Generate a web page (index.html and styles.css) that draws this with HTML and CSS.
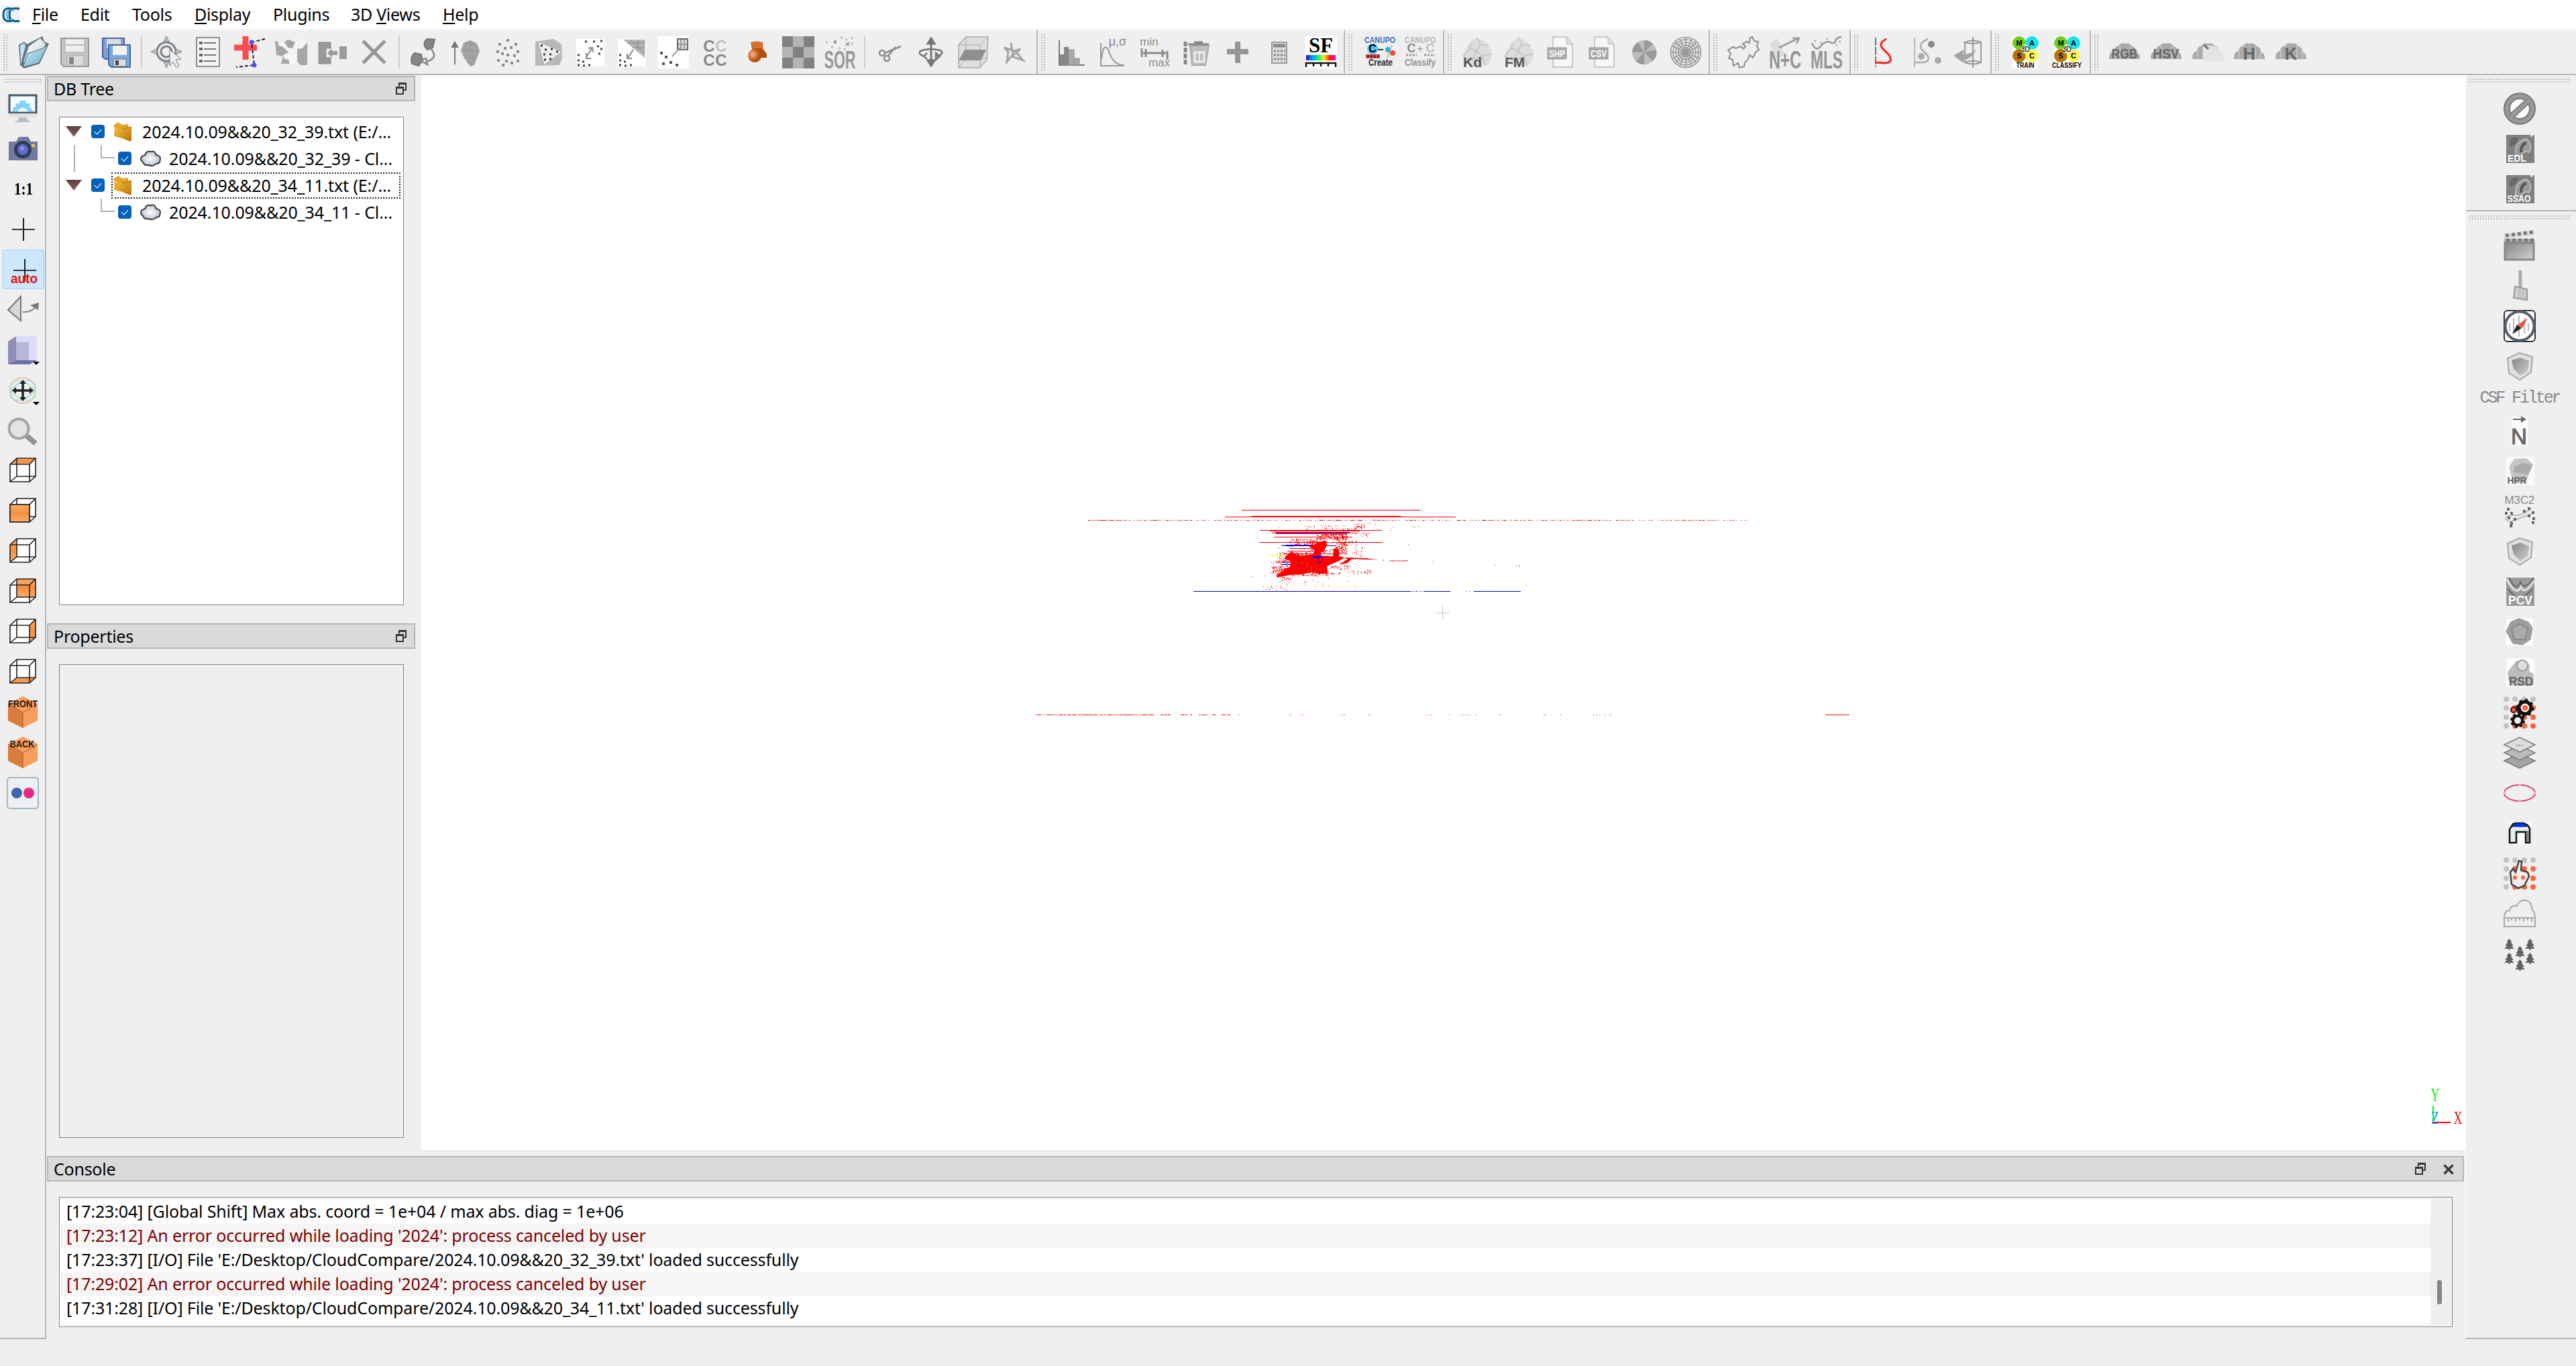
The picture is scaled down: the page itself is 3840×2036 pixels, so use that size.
FILE: index.html
```html
<!DOCTYPE html>
<html lang="en">
<head>
<meta charset="utf-8">
<title>CloudCompare</title>
<link rel="stylesheet" href="styles.css">
</head>
<body>
<svg class="defs" aria-hidden="true">
<defs>
<linearGradient id="paper" x1="0" y1="0" x2="1" y2="1"><stop offset="0" stop-color="#fff"/><stop offset="1" stop-color="#c9d3d8"/></linearGradient>
<linearGradient id="blue" x1="0" y1="0" x2="1" y2="1"><stop offset="0" stop-color="#d4eefa"/><stop offset="1" stop-color="#6aa9c8"/></linearGradient>
<linearGradient id="orange" x1="0" y1="0" x2="0" y2="1"><stop offset="0" stop-color="#f9ac6b"/><stop offset=".5" stop-color="#f78f3e"/><stop offset="1" stop-color="#f9ac6b"/></linearGradient>
<linearGradient id="gold" x1="0" y1="0" x2="1" y2="1"><stop offset="0" stop-color="#f5bf3d"/><stop offset="1" stop-color="#b97608"/></linearGradient>
<linearGradient id="rainbow"><stop offset="0" stop-color="#30c"/><stop offset=".2" stop-color="#09f"/><stop offset=".4" stop-color="#0e8"/><stop offset=".6" stop-color="#fe0"/><stop offset=".8" stop-color="#f20"/><stop offset="1" stop-color="#f0c"/></linearGradient>
<linearGradient id="grey" x1="0" y1="0" x2="1" y2="1"><stop offset="0" stop-color="#868686"/><stop offset="1" stop-color="#d0d0d0"/></linearGradient>
<radialGradient id="ball"><stop offset="0" stop-color="#fff"/><stop offset="1" stop-color="#b8c4d0"/></radialGradient>
<radialGradient id="copper" cx=".35" cy=".4"><stop offset="0" stop-color="#f7b486"/><stop offset="1" stop-color="#b5500a"/></radialGradient>
<symbol id="cube" viewBox="0 0 48 48"><path d="M5 14 15 5H43V31L33 40H5Z" fill="#fff"/></symbol>
<symbol id="wire" viewBox="0 0 48 48"><path d="M5 14H34V40H5ZM15 5H43V32H15ZM5 14 15 5M34 14 43 5M34 40 43 32M5 40 15 32" fill="none" stroke="#222" stroke-width="1.6"/></symbol>
<symbol id="folder" viewBox="0 0 30 32"><path d="M1 7 8 2 14 6 23 5 25 24 8 24Z" fill="#e0a528"/><path d="M3 8 14 13 28 9 28 29 26 31 14 26 2 23Z" fill="url(#gold)"/><path d="M14 13 28 9" stroke="#a86c08" stroke-width="1" fill="none"/></symbol>
<symbol id="cloud" viewBox="0 0 32 28"><path d="M8 9Q9 3 16 4 23 2 24 9 32 10 30 17 30 22 24 22 20 27 13 24 6 25 5 20-1 16 3 11Z" fill="url(#ball)" stroke="#3c3c3c" stroke-width="2"/></symbol>
<symbol id="float" viewBox="0 0 16 18"><path d="M5 5.500V1H15V11H11" fill="none" stroke="#333" stroke-width="2"/><path d="M4 1.500H16M0 7.500H12" stroke="#333" stroke-width="3"/><path d="M1 7V17H11V7" fill="none" stroke="#333" stroke-width="2"/></symbol>
<symbol id="shield" viewBox="0 0 48 48"><path d="M6 12 24 4 43 10 41 33 24 44 8 34Z" fill="#e0e0e0" stroke="#a8a8a8" stroke-width="2"/><path d="M12 15 25 11 38 16 36 31 25 38 15 28Z" fill="url(#grey)"/></symbol>
<symbol id="puff" viewBox="0 0 48 28"><path d="M1 26Q1 15 8 14 9 7 15 6 18 1 25 3 31 1 35 7 41 8 41 15 47 17 47 26Z" fill="#aaa"/><path d="M9 25V14M17 25V6M33 25V7M41 25V15" stroke="#c4c4c4" stroke-width="2"/></symbol>
<symbol id="rock" viewBox="0 0 48 48"><path d="M2 30Q6 12 22 2 42 8 45 26 44 40 36 44H16Q4 42 2 30Z" fill="#ddd"/><path d="M2 30 12 18 22 22 28 12 22 2M12 18 14 10M28 12 40 14M22 22 30 30 45 26M30 30 36 44M22 22 16 36 2 30M16 36 30 30" fill="none" stroke="#c2c2c2" stroke-width="1.500"/></symbol>
<symbol id="page" viewBox="0 0 48 48"><path d="M12 1H32L41 12V46H12Z" fill="#f7f7f7" stroke="#bbb" stroke-width="1.500"/><path d="M32 1V12H41" fill="#ddd" stroke="#bbb"/><rect x="4" y="17" width="28" height="17" fill="#aaa" stroke="#999"/></symbol>
<symbol id="quad" viewBox="0 0 48 48"><rect x="5" width="38" height="48" fill="#fff"/><circle cx="15" cy="10" r="10" fill="#6fd01c"/><circle cx="34" cy="10" r="10" fill="#12e4f0"/><circle cx="15" cy="29" r="10" fill="#b97608"/><circle cx="34" cy="29" r="10" fill="#fdf55e"/><circle cx="24" cy="19" r="7" fill="#e8e8d8" opacity=".75"/><text x="15" y="14" class="b q">M</text><text x="34" y="14" class="b q">A</text><text x="24" y="23" class="q">3D</text><text x="15" y="33" class="b q">S</text><text x="34" y="33" class="b q">C</text></symbol>
<symbol id="pine" viewBox="0 0 14 16"><path d="M7 0 11 5 9 5 13 10H10L14 14H8V16H6V14H0L4 10H1L5 5H3Z" fill="#616161"/></symbol>
<symbol id="stone" viewBox="0 0 42 42"><rect width="42" height="42" fill="#808080"/><path d="M4 8Q12-2 20 5 12 20 4 20Z" fill="#6a6a6a" stroke="#999"/><path d="M14 30Q12 10 30 6 40 14 34 26 26 22 22 32Z" fill="#999" stroke="#b8b8b8" stroke-width="2"/><path d="M22 26Q22 14 30 12" stroke="#555" stroke-width="4" fill="none"/><path d="M36 2 40 0" stroke="#ddd" stroke-width="3"/></symbol>
<symbol id="grid" viewBox="0 0 48 48"><g fill="#c3c3c3"><circle cx="4" cy="4" r="4"/><circle cx="17" cy="4" r="4"/><circle cx="31" cy="4" r="4"/><circle cx="44" cy="4" r="4"/><circle cx="4" cy="17" r="4"/><circle cx="4" cy="31" r="4"/><circle cx="4" cy="44" r="4"/></g><g fill="#fb6440"><circle cx="17" cy="17" r="4"/><circle cx="31" cy="17" r="4"/><circle cx="44" cy="17" r="4"/><circle cx="17" cy="31" r="4"/><circle cx="31" cy="31" r="4"/><circle cx="44" cy="31" r="4"/><circle cx="17" cy="44" r="4"/><circle cx="31" cy="44" r="4"/><circle cx="44" cy="44" r="4"/></g></symbol>
</defs>
</svg>

<div class="window">
<nav class="menubar">
<svg class="logo" viewBox="0 0 28 28"><rect width="28" height="28" fill="#eef2f5"/><path d="M16 5Q3 2 3 14T16 23M27 5Q12 2 12 14T27 23" fill="none" stroke="#0b5b87" stroke-width="3"/><path d="M19 7Q8 5 8 14T19 21" fill="none" stroke="#4aa5d0" stroke-width="2"/></svg>
<span class="m1"><u>F</u>ile</span><span class="m2">Edit</span><span class="m3">Tools</span><span class="m4"><u>D</u>isplay</span><span class="m5">Plugins</span><span class="m6">3D <u>V</u>iews</span><span class="m7"><u>H</u>elp</span>
</nav>

<header class="toolbars">
<div class="group first"><i class="grip"></i>
<svg viewBox="0 0 48 48"><path d="M2 13 10 8 14 12 37 0 40 8 47 11 33 41 10 48 4 43Z" fill="#66767e"/><path d="M9 38 17 15 34 3 42 12 27 40Z" fill="url(#paper)"/><path d="M4 14 10 10 12 15 5 41Z" fill="#bfe3f2"/><path d="M8 46 15 26 40 17 46 12 32 40Z" fill="url(#blue)" stroke="#4b6873"/></svg>
<svg viewBox="0 0 48 48"><path d="M3 3H44V45H7L3 41Z" fill="#c6c6c6" stroke="#999" stroke-width="2"/><rect x="9" y="4" width="29" height="20" fill="#eee" stroke="#aaa"/><path d="M9 13H38" stroke="#bbb" stroke-width="2"/><rect x="12" y="29" width="25" height="15" fill="#ddd" stroke="#a8a8a8"/><rect x="15" y="31" width="7" height="11" fill="#888"/></svg>
<svg viewBox="0 0 48 48"><path d="M3 3H35V34H7L3 31Z" fill="#7fa0d8" stroke="#4765a3" stroke-width="2"/><path d="M9 4H30V18H9Z" fill="#d9dde0"/><path d="M12 13H44V46H16L12 42Z" fill="#79a9e0" stroke="#40689c" stroke-width="2"/><path d="M18 14H39V28H18Z" fill="#f1f1ed"/><path d="M19 34H38V45H19Z" fill="#ddd" stroke="#666"/><path d="M22 36H27V43H22Z" fill="#444"/></svg>
<b class="sep"></b>
<svg viewBox="0 0 48 48"><g fill="none" stroke="#7c8389" stroke-width="3"><circle cx="24" cy="23" r="14"/><circle cx="24" cy="23" r="8"/></g><path d="M24 0 28 8H20ZM24 47 20 38H28ZM1 23 10 19V27ZM47 23 38 19V27Z" fill="#b9c2c8" stroke="#777e83"/><path d="M29 20V44L34 38 39 47 43 44 38 35 46 34Z" fill="#eee" stroke="#777"/></svg>
<svg viewBox="0 0 48 48"><rect x="7" y="2" width="34" height="43" fill="#f4f4f4" stroke="#8f8f8f" stroke-width="2"/><path d="M18 10H36M18 19H36M18 28H36M18 37H36" stroke="#777" stroke-width="2"/><path d="M11 10H16M11 19H16M11 28H16M11 37H16" stroke="#666" stroke-width="4"/></svg>
<svg viewBox="0 0 48 48"><path d="M18 0V35M1 17H35" stroke="#fa4d4f" stroke-width="9"/><path d="M47 4 27 9 31 43 4 46" fill="none" stroke="#222" stroke-width="2" stroke-dasharray="5 3"/><circle cx="27" cy="9" r="3.500" fill="#4e50f4"/><circle cx="31" cy="43" r="3.500" fill="#4e50f4"/></svg>
<svg viewBox="0 0 48 48"><path d="M0 7 11 10 20 5 30 9 42 6 48 11V43H38L32 36 26 41H9L12 30 2 28Z" fill="#a6a6a6"/><path d="M5 7 14 9 19 17 26 18 30 9 38 4 44 4 47 10 41 18 33 19 33 37 28 42H22L20 35 14 34 12 28 20 24 12 16 5 14Z" fill="#f5f5f5"/></svg>
<svg viewBox="0 0 48 48"><path d="M3 9H21V18H14V32H21V41H3Z" fill="#999" stroke="#888"/><path d="M34 15H45V34H34ZM31 22V28H23V32L16 25 23 18V22Z" fill="#9a9a9a"/></svg>
<svg viewBox="0 0 48 48"><path d="M7 7 40 40M40 7 7 40" stroke="#969696" stroke-width="5"/></svg>
<b class="sep"></b>
<svg viewBox="0 0 48 48"><path d="M25 15Q23 6 30 4L40 5 37 17 29 20ZM6 41Q3 30 10 25L20 27 22 36 16 44Z" fill="#858585" stroke="#777" stroke-width="2"/><path d="M34 18Q47 33 27 38M18 36 29 42 27 33Z" fill="none" stroke="#888" stroke-width="2.500"/></svg>
<svg viewBox="0 0 48 48"><path d="M8 42V15M4 16H12L8 9Z" stroke="#777" stroke-width="2" fill="#777"/><path d="M31 6 41 11 45 22 37 43 31 45 23 34 17 22 21 10Z" fill="#9f9f9f"/><path d="M20 14 41 18M19 24 42 28M25 35 38 36" stroke="#b6b6b6" stroke-width="2" stroke-dasharray="3 3"/></svg>
<svg viewBox="0 0 48 48"><path d="M23 6h4M11 12h4M35 12h4M19 18h4M28 17h4M8 23h4M38 23h4M15 26h4M23 28h4M33 29h4M9 36h4M38 37h4M21 37h4M29 40h4M16 43h4" stroke="#8c8c8c" stroke-width="4"/></svg>
<svg viewBox="0 0 48 48"><path d="M4 8 31 4 43 12 44 33 40 43 4 44Z" fill="#b9b9b9"/><path d="M8 8 44 23 17 43Z" fill="#efefef" stroke="#aaa"/><path d="M12 14h3M18 20h3M27 19h3M16 27h3M25 27h3M35 23h3M17 35h3M25 34h3" stroke="#333" stroke-width="3"/></svg>
<svg viewBox="0 0 48 48"><rect x="3" y="4" width="42" height="41" fill="#fff"/><path d="M16 8h3M28 8h3M39 7h3M34 15h3M39 19h3M36 26h3M5 28h3M5 36h3M12 38h3M5 43h3M13 44h3M21 43h3" stroke="#444" stroke-width="3"/><path d="M18 31 27 17M18 25V33H25M21 18 27 17 28 24" fill="none" stroke="#888" stroke-width="2"/></svg>
<svg viewBox="0 0 48 48"><rect x="3" y="4" width="42" height="41" fill="#fff"/><path d="M11 5H44L43 32Z" fill="#b5b5b5"/><path d="M17 10H43M24 17H43M22 5 43 25M33 5V22" stroke="#888"/><path d="M5 28h3M5 36h3M12 38h3M5 43h3M13 44h3M21 43h3" stroke="#444" stroke-width="3"/><path d="M18 32 26 20M17 26V33H24" fill="none" stroke="#888" stroke-width="2"/></svg>
<svg viewBox="0 0 48 48"><rect x="1" width="46" height="48" fill="#fff"/><rect x="30" y="4" width="15" height="16" fill="#ddd" stroke="#666" stroke-width="2"/><path d="M35 5V18M40 5V18M31 12H45M22 30 34 17" stroke="#999" stroke-width="2"/><path d="M4 25h4M11 31h4M7 41h4M18 39h4M27 43h4" stroke="#555" stroke-width="4"/></svg>
<svg viewBox="0 0 48 48"><text x="15" y="23" class="b s22" fill="#888">C</text><text x="33" y="23" class="b s22" fill="#c4c4c4">C</text><text x="15" y="44" class="b s22" fill="#888">C</text><text x="33" y="44" class="b s22" fill="#888">C</text></svg>
<svg viewBox="0 0 48 48"><path d="M26 10 39 26V32H28ZM15 9H33V23H18Z" fill="#b04f0b"/><path d="M16 9Q25 6 32 9V18H17Z" fill="#d4732b"/><circle cx="21" cy="29" r="10" fill="url(#copper)"/></svg>
<svg viewBox="0 0 48 48"><rect width="48" height="48" fill="#818181"/><path d="M16 0h16v16H16zM0 16h16v16H0zM32 16h16v16H32zM16 32h16v16H16z" fill="#b4b4b4"/></svg>
<svg viewBox="0 0 48 48"><path d="M3 9h3M15 7h3M25 2h3M32 5h3M41 3h3M11 16h3M22 18h3M30 19h3M41 11h3" stroke="#bbb" stroke-width="3"/><path d="M15 7 19 11M19 7 15 11M33 10 38 14M38 9 33 14" stroke="#888" stroke-width="1.500"/><text x="24" y="47.500" class="b" textLength="47" lengthAdjust="spacingAndGlyphs" fill="#999" font-size="36">SOR</text></svg>
<b class="sep"></b>
<svg viewBox="0 0 48 48"><g fill="none" stroke="#8b8b8b" stroke-width="2.500"><circle cx="13" cy="25" r="4"/><circle cx="20" cy="33" r="4"/><path d="M17 25 41 15M22 29 33 16"/></g></svg>
<svg viewBox="0 0 48 48"><path d="M24 8V40M24 3 29 11H19ZM24 44 19 36H29Z" stroke="#777" stroke-width="3" fill="#777"/><path d="M14 30Q4 27 8 22 20 17 38 21 45 27 31 30M18 25 13 30 18 34M31 25V35L37 30Z" fill="none" stroke="#777" stroke-width="2.500"/></svg>
<svg viewBox="0 0 48 48"><path d="M3 13 14 1H47L45 36 34 47H3Z" fill="#dedede" stroke="#aaa" stroke-width="1.500"/><path d="M3 13H35V47M35 13 47 1M14 1V33L3 47M14 33H46" fill="none" stroke="#aaa"/><path d="M12 20H44L36 36H3Z" fill="#8f8f8f"/></svg>
<svg viewBox="0 0 48 48"><path d="M19 10 22 27 13 38 15 23 9 17 25 22 33 19 20 30 37 36 27 24" fill="none" stroke="#a4a4a4" stroke-width="3"/></svg>
</div>
<div class="group"><i class="grip"></i>
<svg viewBox="0 0 48 48"><path d="M6 6V43H44" fill="none" stroke="#777" stroke-width="2"/><path d="M7 27H13V16H20V43H7Z" fill="#888"/><path d="M20 20H28V43H20ZM29 33H36V43H29Z" fill="#aaa" stroke="#888"/></svg>
<svg viewBox="0 0 48 48"><path d="M6 10V44H41M7 34Q10 6 18 22 24 43 40 43" fill="none" stroke="#999" stroke-width="2"/><text x="31" y="14" font-size="18" fill="#888">μ,σ</text></svg>
<svg viewBox="0 0 48 48"><text x="16" y="14" font-size="17" fill="#8c8c8c">min</text><text x="31" y="45" font-size="17" fill="#8c8c8c">max</text><path d="M5 18V31M43 22V35M7 25H41M11 19V31M36 20V31" stroke="#8b8b8b" stroke-width="3"/></svg>
<svg viewBox="0 0 48 48"><path d="M8 8V42" stroke="#888" stroke-width="5" stroke-dasharray="7 2"/><path d="M15 14H43L38 43H18Z" fill="#bdbdbd" stroke="#aaa" stroke-width="2"/><path d="M12 12H43M21 9H34" stroke="#888" stroke-width="3"/><rect x="22" y="24" width="14" height="14" fill="none" stroke="#eee" stroke-width="3"/><path d="M29 24V38" stroke="#eee" stroke-width="2"/></svg>
<svg viewBox="0 0 48 48"><path d="M24 8V40M8 23H40" stroke="#969696" stroke-width="8"/></svg>
<svg viewBox="0 0 48 48"><rect x="13" y="9" width="22" height="31" fill="#ddd" stroke="#999" stroke-width="2"/><path d="M15 14H33" stroke="#888" stroke-width="5"/><path d="M16 22H33M16 28H33M16 34H33" stroke="#888" stroke-width="3" stroke-dasharray="3 2"/></svg>
<svg viewBox="0 0 48 48"><rect width="48" height="48" fill="#fff"/><text x="24" y="24" font-family="Liberation Serif, serif" font-weight="bold" class="sf" textLength="36" lengthAdjust="spacingAndGlyphs">SF</text><rect x="2" y="28" width="44" height="8" fill="url(#rainbow)"/><path d="M2 46V40H46V46M13 40V45M24 40V45M35 40V45" fill="none" stroke="#111" stroke-width="2.500"/></svg>
</div>
<div class="group"><i class="grip"></i>
<svg viewBox="0 0 48 48"><text x="26" y="10" class="b" font-size="12" textLength="46" lengthAdjust="spacingAndGlyphs" fill="#3d6cc0">CANUPO</text><circle cx="15" cy="19" r="8" fill="#56c5ef"/><text x="15" y="24" class="b" font-size="16">C</text><path d="M23 20H31" stroke="#333" stroke-width="2"/><circle cx="38" cy="20" r="4" fill="#25b4e5"/><circle cx="45" cy="25" r="4" fill="#f04b3e"/><path d="M37 32 44 13" stroke="#8a9a50"/><path d="M5 30H26" stroke="#e44" stroke-width="6"/><path d="M7 30H26" stroke="#333" stroke-width="3" stroke-dasharray="3 2"/><text x="27" y="44" class="b" font-size="14" textLength="36" lengthAdjust="spacingAndGlyphs" fill="#1c2c3c">Create</text></svg>
<svg viewBox="0 0 48 48"><text x="24" y="10" class="b" font-size="12" textLength="46" lengthAdjust="spacingAndGlyphs" fill="#b8b8b8">CANUPO</text><text x="11" y="24" class="b" font-size="18" fill="#888">C</text><text x="24" y="24" font-size="16" fill="#999">+</text><text x="39" y="24" class="b" font-size="18" fill="#bbb">C</text><path d="M3 28H19M30 28H46" stroke="#999" stroke-width="3" stroke-dasharray="3 2"/><text x="24" y="44" class="b" font-size="14" textLength="46" lengthAdjust="spacingAndGlyphs" fill="#929292">Classify</text></svg>
</div>
<div class="group"><i class="grip"></i>
<svg viewBox="0 0 48 48"><use href="#rock"/><text x="16" y="46" class="b" font-size="21" fill="#555">Kd</text></svg>
<svg viewBox="0 0 48 48"><use href="#rock"/><text x="17" y="46" class="b" font-size="21" textLength="30" lengthAdjust="spacingAndGlyphs" fill="#555">FM</text></svg>
<svg viewBox="0 0 48 48"><use href="#page"/><text x="18" y="31" class="b" font-size="14" textLength="24" lengthAdjust="spacingAndGlyphs" fill="#fff">SHP</text></svg>
<svg viewBox="0 0 48 48"><use href="#page"/><text x="18" y="31" class="b" font-size="14" textLength="24" lengthAdjust="spacingAndGlyphs" fill="#fff">CSV</text></svg>
<svg viewBox="0 0 48 48"><circle cx="24" cy="24" r="18" fill="#bdbdbd"/><path d="M24 24 6 24A18 18 0 0 1 15 9ZM24 24V6A18 18 0 0 1 37 11ZM24 24 42 20A18 18 0 0 1 37 37ZM24 24 24 42A18 18 0 0 1 11 37Z" fill="#999"/></svg>
<svg viewBox="0 0 48 48"><g fill="none" stroke="#999" stroke-width="1.700"><circle cx="24" cy="24" r="22.500"/><circle cx="24" cy="24" r="19"/><circle cx="24" cy="24" r="15"/><circle cx="24" cy="24" r="11"/><circle cx="24" cy="24" r="7"/><circle cx="24" cy="24" r="3"/><path d="M2 24H46M24 2V46M4 15 44 33M4 33 44 15M15 4 33 44M33 4 15 44M8 8 40 40M40 8 8 40"/></g></svg>
</div>
<div class="group"><i class="grip"></i>
<svg viewBox="0 0 48 48"><path d="M37 1 40 7 46 8 44 15 47 20 42 24 38 32 33 28 30 36 26 39 25 45 18 47 16 40 9 44 8 35 2 33 5 26 1 21 8 16 13 18 20 15 24 19 27 15 23 11 29 8 33 10 34 2Z" fill="#eee" stroke="#8d8d8d" stroke-width="2"/></svg>
<svg viewBox="0 0 48 48"><path d="M2 10 12 3 25 28 8 34Z" fill="#ddd"/><path d="M15 17 44 3M35 3H45L41 11" stroke="#999" stroke-width="2.500" fill="none"/><text x="24" y="47.500" class="b" font-size="36" textLength="48" lengthAdjust="spacingAndGlyphs" fill="#959595">N+C</text></svg>
<svg viewBox="0 0 48 48"><path d="M2 10Q8 24 15 15T29 9 37 7 46 1" fill="none" stroke="#999" stroke-width="2.500"/><path d="M5 7h3M14 10h3M23 4h3M37 13h3M42 8h3" stroke="#bbb" stroke-width="3"/><text x="24" y="47.500" class="b" font-size="36" textLength="48" lengthAdjust="spacingAndGlyphs" fill="#959595">MLS</text></svg>
</div>
<div class="group"><i class="grip"></i>
<svg viewBox="0 0 48 48"><path d="M11 2V46" stroke="#555" stroke-width="1.600" stroke-dasharray="12 2"/><path d="M27 4Q15 10 21 18L31 28Q38 39 25 40L11 39" fill="none" stroke="#fa2525" stroke-width="3"/></svg>
<svg viewBox="0 0 48 48"><path d="M7 2V46" stroke="#aaa" stroke-width="1.600"/><path d="M27 4Q13 10 17 19L26 28Q31 37 21 39L8 39" fill="none" stroke="#aaa" stroke-width="2.500"/><circle cx="32" cy="12" r="5" fill="#888"/><circle cx="17" cy="30" r="5" fill="#aaa"/><circle cx="42" cy="36" r="5" fill="#aaa"/></svg>
<svg viewBox="0 0 48 48"><path d="M20 9V39Q32 44 44 39V9Q32 4 20 9 32 13 44 9M32 1V47M20 39Q32 34 44 39" fill="none" stroke="#999" stroke-width="2"/><path d="M37 19Q31 34 18 35V40L3 29 18 20V27Q30 27 37 19Z" fill="#a3a3a3"/></svg>
</div>
<div class="group"><i class="grip"></i>
<svg viewBox="0 0 48 48"><use href="#quad"/><text x="24" y="47" class="b" font-size="10" textLength="27" lengthAdjust="spacingAndGlyphs">TRAIN</text></svg>
<svg viewBox="0 0 48 48"><use href="#quad"/><text x="24" y="47" class="b" font-size="10" textLength="44" lengthAdjust="spacingAndGlyphs">CLASSIFY</text></svg>
</div>
<div class="group last"><i class="grip"></i>
<svg viewBox="0 0 48 48"><use href="#puff" y="-2"/><text x="24" y="33" class="b" font-size="20" textLength="39" lengthAdjust="spacingAndGlyphs" fill="#666">RGB</text></svg>
<svg viewBox="0 0 48 48"><use href="#puff" y="-2"/><text x="24" y="33" class="b" font-size="20" textLength="39" lengthAdjust="spacingAndGlyphs" fill="#666">HSV</text></svg>
<svg viewBox="0 0 48 48"><use href="#puff" y="-2"/><path d="M17 37V14H31Q47 19 47 37Z" fill="#e4e4e4"/><path d="M18 13 25 19" stroke="#777" stroke-width="3"/></svg>
<svg viewBox="0 0 48 48"><use href="#puff" y="-2"/><text x="24" y="35" class="b" font-size="26" fill="#666">H</text></svg>
<svg viewBox="0 0 48 48"><use href="#puff" y="-2"/><text x="24" y="35" class="b" font-size="26" fill="#666">K</text></svg>
</div>
</header>

<div class="middle">
<aside class="left"><i class="hgrip"></i>
<div><svg viewBox="0 0 48 48"><path d="M4 4H44V30H4Z" fill="#f5fbff" stroke="#415a6d" stroke-width="3"/><path d="M9 28Q8 22 14 21L13 16 18 17 20 12H28L30 17 35 16 34 21 40 28Z" fill="#7ed4fa"/><path d="M16 28Q24 17 32 28Z" fill="#fff"/><path d="M4 31H44V37H4Z" fill="#e3e3e3"/><path d="M18 37H30L31 41 37 44H11L17 41Z" fill="#b3bdc5"/></svg></div>
<div><svg viewBox="0 0 48 48"><path d="M3 13H14L18 6H32L36 13H46V41H3Z" fill="#707b9e"/><circle cx="24" cy="25" r="13" fill="#303b58"/><circle cx="24" cy="25" r="8" fill="#5d6dcb"/><circle cx="23" cy="23" r="3" fill="#8990ee"/><rect x="37" y="17" width="5" height="4" fill="#f1c64d"/></svg></div>
<div><svg viewBox="0 0 48 48"><text x="25" y="32" class="ratio" textLength="28" lengthAdjust="spacingAndGlyphs">1:1</text></svg></div>
<div><svg viewBox="0 0 48 48"><path d="M25 7V41M8 24H42" stroke="#000" stroke-width="1.700"/></svg></div>
<div class="active"><svg viewBox="0 0 48 48"><path d="M27 8V42M10 25H44" stroke="#000" stroke-width="1.700"/><text x="26" y="44" class="b" font-size="20" textLength="40" lengthAdjust="spacingAndGlyphs" fill="#f20d0d">auto</text></svg></div>
<div><svg viewBox="0 0 48 48"><path d="M2 24 21 4V40Z" fill="#d8d8d8" stroke="#777" stroke-width="2"/><path d="M24 27Q36 28 44 19" fill="none" stroke="#888" stroke-width="2"/><path d="M35 17 48 13 47 24Z" fill="#777"/></svg></div>
<div><svg viewBox="0 0 48 48"><path d="M2 11 13 3H45V39L34 45H2Z" fill="#b5b5d8"/><path d="M13 3H45V39L33 39V12H13Z" fill="#dcdcfa"/><path d="M2 11 14 4V39L2 45Z" fill="#8e8eb6"/><path d="M2 45 14 39H45L34 45Z" fill="#6e6ea6"/><path d="M39 41H49L44 46Z"/></svg></div>
<div><svg viewBox="0 0 48 48"><g fill="none" stroke-width="2"><circle cx="24" cy="24" r="19" stroke="#f4b7b7"/><ellipse cx="24" cy="24" rx="20" ry="12" transform="rotate(30 24 24)" stroke="#b7ecb7"/><ellipse cx="24" cy="24" rx="20" ry="12" transform="rotate(-30 24 24)" stroke="#b7d2ef"/></g><path d="M24 12V36M12 24H36" stroke="#222" stroke-width="3.500"/><path d="M24 8 29 14H19ZM24 40 19 34H29ZM8 24 14 19V29ZM40 24 34 19V29Z" fill="#222"/><path d="M39 41H49L44 46Z"/></svg></div>
<div><svg viewBox="0 0 48 48"><path d="M29 31 43 43" stroke="#939393" stroke-width="8"/><circle cx="18" cy="21" r="14.500" fill="#e3e3e3" stroke="#a5a5a5" stroke-width="4"/></svg></div>
<div><svg viewBox="0 0 48 48"><use href="#cube"/><path d="M5 14 15 5H43L34 14Z" fill="url(#orange)"/><use href="#wire"/></svg></div>
<div><svg viewBox="0 0 48 48"><use href="#cube"/><use href="#wire"/><path d="M5 14H34V40H5Z" fill="url(#orange)" stroke="#222" stroke-width="1.600"/></svg></div>
<div><svg viewBox="0 0 48 48"><use href="#cube"/><path d="M5 14 15 5V32L5 40Z" fill="url(#orange)"/><use href="#wire"/></svg></div>
<div><svg viewBox="0 0 48 48"><use href="#cube"/><path d="M15 5H43V32H15Z" fill="url(#orange)"/><use href="#wire"/></svg></div>
<div><svg viewBox="0 0 48 48"><use href="#cube"/><path d="M34 14 43 5V32L34 40Z" fill="url(#orange)"/><use href="#wire"/></svg></div>
<div><svg viewBox="0 0 48 48"><use href="#cube"/><path d="M5 40 15 32H43L34 40Z" fill="url(#orange)"/><use href="#wire"/></svg></div>
<div><svg viewBox="0 0 48 48"><path d="M24 0 46 11V36L24 47 2 36V11Z" fill="#f99d5f"/><path d="M2 11 24 24V47L2 36Z" fill="#d97c3e"/><path d="M2 11 24 24 46 11M24 24V47" fill="none" stroke="#a06238"/><text x="24" y="16" class="b" font-size="15" textLength="44" lengthAdjust="spacingAndGlyphs" fill="#241a14">FRONT</text></svg></div>
<div><svg viewBox="0 0 48 48"><path d="M24 0 46 11V36L24 47 2 36V11Z" fill="#f99d5f"/><path d="M2 11 24 24V47L2 36Z" fill="#d97c3e"/><path d="M2 11 24 24 46 11M24 24V47" fill="none" stroke="#a06238"/><text x="23" y="16" class="b" font-size="15" textLength="37" lengthAdjust="spacingAndGlyphs" fill="#241a14">BACK</text></svg></div>
<div><svg viewBox="0 0 48 48"><rect x="1" y="1" width="46" height="46" rx="4" fill="#edf1f4" stroke="#a6b7c2" stroke-width="2"/><circle cx="15" cy="24" r="8" fill="#4264b0"/><circle cx="33" cy="24" r="8" fill="#e62a83"/></svg></div>
</aside>

<div class="center">
<div class="upper">
<section class="docks">
<div class="title">DB Tree<svg class="fl" viewBox="0 0 16 18"><use href="#float"/></svg></div>
<div class="tree">
<div class="row"><i class="arrow"></i><b class="check"></b><span class="item"><svg class="fo"><use href="#folder"/></svg>2024.10.09&amp;&amp;20_32_39.txt (E:/...</span></div>
<div class="row child"><i class="trunk"></i><i class="elbow"></i><b class="check"></b><span class="item"><svg class="cl"><use href="#cloud"/></svg>2024.10.09&amp;&amp;20_32_39 - Cl...</span></div>
<div class="row"><i class="arrow"></i><b class="check"></b><span class="item focus"><svg class="fo"><use href="#folder"/></svg>2024.10.09&amp;&amp;20_34_11.txt (E:/...</span></div>
<div class="row child"><i class="trunk off"></i><i class="elbow"></i><b class="check"></b><span class="item"><svg class="cl"><use href="#cloud"/></svg>2024.10.09&amp;&amp;20_34_11 - Cl...</span></div>
</div>
<div class="title">Properties<svg class="fl" viewBox="0 0 16 18"><use href="#float"/></svg></div>
<div class="props"></div>
</section>
<main class="view">
<canvas id="points" width="3047" height="1602"></canvas>
<svg class="axes" viewBox="0 0 52 60"><path d="M6 28V54" stroke="#0f0" stroke-width="2"/><path d="M5 53H32" stroke="#f00" stroke-width="2"/><text x="9" y="21" textLength="13" lengthAdjust="spacingAndGlyphs" fill="#0f0">Y</text><text x="9" y="55" textLength="12" lengthAdjust="spacingAndGlyphs" fill="#00aaff">Z</text><text x="43" y="55" textLength="13" lengthAdjust="spacingAndGlyphs" fill="#f00">X</text></svg>
</main>
</div>
<section class="console">
<div class="title wide">Console<svg class="fl" viewBox="0 0 16 18"><use href="#float"/></svg><svg class="cx" viewBox="0 0 16 16"><path d="M1.500 1.500 14.500 14.500M14.500 1.500 1.500 14.500" stroke="#3c3c3c" stroke-width="3.500"/></svg></div>
<div class="log">
<div class="lines">
<p>[17:23:04] [Global Shift] Max abs. coord = 1e+04 / max abs. diag = 1e+06</p>
<p class="err">[17:23:12] An error occurred while loading '2024': process canceled by user</p>
<p>[17:23:37] [I/O] File 'E:/Desktop/CloudCompare/2024.10.09&amp;&amp;20_32_39.txt' loaded successfully</p>
<p class="err">[17:29:02] An error occurred while loading '2024': process canceled by user</p>
<p>[17:31:28] [I/O] File 'E:/Desktop/CloudCompare/2024.10.09&amp;&amp;20_34_11.txt' loaded successfully</p>
</div>
<div class="scroll"><i></i></div>
</div>
</section>
</div>

<aside class="right">
<div class="rg"><i class="hgrip"></i>
<div><svg viewBox="0 0 48 48"><circle cx="24" cy="24" r="19" fill="#fff" stroke="#777" stroke-width="10"/><circle cx="24" cy="24" r="19" fill="none" stroke="#999" stroke-width="6"/><path d="M11 36 37 12" stroke="#777" stroke-width="9"/><path d="M11 36 37 12" stroke="#999" stroke-width="6"/></svg></div>
<div><svg viewBox="0 0 48 48"><use href="#stone" x="4" y="3" width="42" height="42"/><text x="20" y="43" class="b" font-size="15" textLength="28" lengthAdjust="spacingAndGlyphs" fill="#fff">EDL</text></svg></div>
<div><svg viewBox="0 0 48 48"><use href="#stone" x="4" y="3" width="42" height="42"/><text x="23" y="43" class="b" font-size="15" textLength="35" lengthAdjust="spacingAndGlyphs" fill="#fff">SSAO</text></svg></div>
</div>
<div class="rg two"><i class="hgrip"></i>
<div><svg viewBox="0 0 48 48"><path d="M1 6 45 1V9L1 14Z" fill="#ddd"/><path d="M1 14H46V19H1Z" fill="#aaa"/><path d="M3 9 44 4M4 16H45" stroke="#777" stroke-width="5" stroke-dasharray="5 4"/><rect x="2" y="20" width="43" height="25" fill="url(#grey)" stroke="#888" stroke-width="3"/></svg></div>
<div><svg viewBox="0 0 48 48"><path d="M25 1V26" stroke="#aaa" stroke-width="5"/><path d="M17 25 35 29V45L15 42Z" fill="#ccc" stroke="#999" stroke-width="2"/><path d="M24 28V42M30 29V43" stroke="#aaa"/></svg></div>
<div><svg viewBox="0 0 48 48"><rect x="1" y="1" width="46" height="46" rx="5" fill="#fff" stroke="#333" stroke-width="2"/><circle cx="24" cy="24" r="21.500" fill="#fff" stroke="#525f6d" stroke-width="4"/><path d="M15 12V35M23 8V40M31 12V35M9 20V31M37 20V31" stroke="#bbb" stroke-width="2"/><path d="M36 12 28 27 21 22Z" fill="#e95548"/><path d="M13 36 20 22 27 27Z" fill="#222"/></svg></div>
<div><svg viewBox="0 0 48 48"><use href="#shield"/></svg></div>
<div class="csf">CSF Filter</div>
<div><svg viewBox="0 0 48 48"><rect x="12" y="3" width="24" height="43" fill="#fafafa"/><path d="M14 7H27" stroke="#666" stroke-width="2"/><path d="M26 2 34 7 26 12Z" fill="#666"/><text x="23" y="44" font-size="34" textLength="24" lengthAdjust="spacingAndGlyphs" fill="#666" stroke="#666">N</text></svg></div>
<div><svg viewBox="0 0 48 48"><rect x="4" y="3" width="42" height="42" fill="#fafafa"/><path d="M8 18 16 6 34 5 44 14 38 28 33 42H15Z" fill="#c4c4c4"/><path d="M16 18 28 12 43 16 37 29 15 26Z" fill="#aaa"/><text x="20" y="43" class="b" font-size="15" textLength="29" lengthAdjust="spacingAndGlyphs" fill="#666">HPR</text></svg></div>
<div><svg viewBox="0 0 48 48"><text x="24" y="13" font-size="17" textLength="45" lengthAdjust="spacingAndGlyphs" fill="#888">M3C2</text><path d="M3 33Q14 29 20 30T42 20M2 35 9 40 44 27" fill="none" stroke="#aaa" stroke-width="1.500"/><path d="M2 27h4M10 27h4M6 34h4M15 36h4M29 24h4M36 20h4M42 26h4M36 31h4M43 35h4M10 42h4M5 21h4M42 41h4M9 46h4" stroke="#666" stroke-width="4"/></svg></div>
<div><svg viewBox="0 0 48 48"><use href="#shield"/></svg></div>
<div><svg viewBox="0 0 48 48"><rect x="4" y="3" width="42" height="42" fill="#9b9b9b"/><path d="M5 5Q18 32 26 17 31 30 45 8" fill="none" stroke="#e2e2e2" stroke-width="3"/><path d="M8 3Q19 26 25 9 31 24 45 3M6 20 18 32M32 30 44 20" fill="none" stroke="#666" stroke-width="2"/><text x="25" y="43" class="b" font-size="18" textLength="36" lengthAdjust="spacingAndGlyphs" fill="#fff">PCV</text></svg></div>
<div><svg viewBox="0 0 48 48"><rect x="4" y="4" width="40" height="40" fill="#fff"/><path d="M4 23 11 9 23 4 37 9 43 18 40 35 28 43 14 41Z" fill="#9f9f9f" stroke="#888"/><path d="M12 19 24 12 36 19 32 35H16Z" fill="#ababab" stroke="#878787" stroke-width="2"/></svg></div>
<div><svg viewBox="0 0 48 48"><rect x="4" y="3" width="42" height="42" fill="#fcfcfc"/><path d="M6 24 18 8 28 5 39 14 38 22 45 27V44H14L7 35Z" fill="#bcbcbc"/><circle cx="28" cy="14" r="8" fill="#ddd" stroke="#999" stroke-width="2"/><text x="26" y="44" class="b" font-size="19" textLength="36" lengthAdjust="spacingAndGlyphs" fill="#606060">RSD</text></svg></div>
<div><svg viewBox="0 0 48 48"><use href="#grid"/><path d="M18 19H28" stroke="#111" stroke-width="5"/><circle cx="32" cy="17" r="9" fill="#ffe9e2" stroke="#111" stroke-width="5"/><circle cx="32" cy="17" r="12" fill="none" stroke="#111" stroke-width="3" stroke-dasharray="4 5.400"/><circle cx="32" cy="17" r="4" fill="#fb6440"/><circle cx="21" cy="36" r="7" fill="#eee" stroke="#111" stroke-width="4"/><circle cx="21" cy="36" r="9.500" fill="none" stroke="#111" stroke-width="3" stroke-dasharray="4 3.500"/><circle cx="15" cy="20" r="4" fill="#f86140" stroke="#402" stroke-width="2"/></svg></div>
<div><svg viewBox="0 0 48 48"><g stroke="#777" stroke-width="1.500"><path d="M1 36 24 25 47 36 24 47Z" fill="#a5a5a5"/><path d="M1 24 24 13 47 24 24 35Z" fill="#bbb"/><path d="M1 12 24 1 47 12 24 23Z" fill="#ddd"/></g><path d="M19 13H29" stroke="#888" stroke-width="2" stroke-dasharray="2 2"/></svg></div>
<div><svg viewBox="0 0 48 48"><ellipse cx="24" cy="24" rx="23" ry="12" fill="none" stroke="#e0456a" stroke-width="2"/><g fill="#f3b0c0"><circle cx="24" cy="12" r="2"/><circle cx="24" cy="36" r="2"/><circle cx="1.500" cy="24" r="2"/><circle cx="46.500" cy="24" r="2"/></g></svg></div>
<div><svg viewBox="0 0 48 48"><rect x="8" y="8" width="32" height="32" fill="#fff"/><path d="M9 38V18L14 10 19 9H30L36 12 39 17V38H33V22H19V38Z" fill="#e5f0f4" stroke="#111" stroke-width="2.500"/><path d="M13 14 19 9H30L35 14Z" fill="#0b31ff" stroke="#00108f"/><path d="M36 20V37" stroke="#888" stroke-width="4"/></svg></div>
<div><svg viewBox="0 0 48 48"><use href="#grid"/><path d="M12 40 10 22 14 17 18 22 23 5 27 6 26 19 36 22 38 28 31 42 22 46Z" fill="#f4ece9" stroke="#444" stroke-width="2.500"/><circle cx="17" cy="30" r="3" fill="#fb6440"/><circle cx="29" cy="30" r="3" fill="#fb6440"/></svg></div>
<div><svg viewBox="0 0 48 48"><path d="M1 30H47V43H1ZM7 30V36M12 30V34M18 30V36M24 30V34M30 30V36M36 30V34M42 30V36M1 30Q1 19 9 19 10 11 20 12 24 2 34 4 43 7 42 17 47 22 47 30" fill="none" stroke="#aaa" stroke-width="2"/></svg></div>
<div><svg viewBox="0 0 48 48"><g transform="translate(1 1)"><use href="#pine" width="15" height="17"/><use href="#pine" x="31" width="15" height="17"/><use href="#pine" x="16" y="11" width="15" height="17"/><use href="#pine" y="21" width="15" height="17"/><use href="#pine" x="31" y="21" width="15" height="17"/><use href="#pine" x="16" y="31" width="15" height="17"/></g></svg></div>
</div>
</aside>
</div>
<footer class="status"></footer>
</div>
<script src="points.js"></script>
</body>
</html>
```
FILE: styles.css
```css
* { box-sizing: border-box; }
body { margin: 0; background: #efefef; font: 25px/36px "Noto Sans", "Open Sans", sans-serif; color: #000; }
.defs { position: absolute; width: 0; height: 0; }
.window { width: 3840px; height: 2036px; display: flex; flex-direction: column; overflow: hidden; }

.menubar { height: 44px; flex: none; display: flex; align-items: center; background: #fff; border-bottom: 1px solid #ebebeb; padding-left: 2px; white-space: pre; }
.menubar span { padding-bottom: 1px; letter-spacing: -0.3px; }
.menubar u { text-decoration-thickness: 2px; text-underline-offset: 3px; }
.logo { width: 28px; height: 28px; margin-right: 18px; }
.m1 { width: 72px; } .m2 { width: 77px; } .m3 { width: 93px; } .m4 { width: 117px; } .m5 { width: 116px; } .m6 { width: 137px; }

svg text { font-family: "Liberation Sans", sans-serif; text-anchor: middle; }
.b { font-weight: bold; }
.s22 { font-size: 24px; }
.q { font-size: 11px; }
svg .sf { font: bold 32px "Liberation Serif", serif; }
svg .ratio { font: bold 26px "Liberation Serif", serif; }

.toolbars { height: 68px; flex: none; display: flex; border-top: 1px solid #fff; border-bottom: 2px solid #b5b5b5; }
.group { display: flex; align-items: center; padding-right: 3px; border-right: 2px solid #b9b9b9; flex: none; }
.group.first { padding-right: 2px; }
.group.last { border-right: 0; }
.group > svg { width: 48px; height: 48px; margin: 0 7px; overflow: visible; }
.grip { width: 7px; height: 54px; margin: 0 7px 0 5px; background: radial-gradient(circle at 1px 1px, #bcbcbc 1px, transparent 1.4px) 0 0 / 4px 4px; }
.sep { width: 2px; height: 48px; margin: 0 5px; background: #cfcfcf; }

.middle { flex: none; height: 1884px; display: flex; }
.left { width: 69px; flex: none; border-right: 2px solid #b7b7b7; border-bottom: 2px solid #b7b7b7; display: flex; flex-direction: column; align-items: center; }
.hgrip { display: block; height: 7px; margin: 5px 6px 8px 7px; align-self: stretch; background: radial-gradient(circle at 1px 1px, #bcbcbc 1px, transparent 1.4px) 0 0 / 4px 4px; }
.left > div, .rg > div { height: 60px; flex: none; display: flex; align-items: center; justify-content: center; }
.left svg, .right svg { width: 48px; height: 48px; overflow: visible; }
.left > .active { width: 62px; background: #cce8ff; border: 1px solid #99d1ff; border-radius: 3px; margin: 0 0 1px 3px; height: 59px; }
.active svg { margin-right: 3px; }

.center { width: 3606px; flex: none; display: flex; flex-direction: column; }
.upper { height: 1602px; display: flex; }
.docks { width: 559px; flex: none; padding: 1px 9px 18px 1px; display: flex; flex-direction: column; }
.title { height: 38px; flex: none; background: #dadada; border: 2px solid #b7b7b7; padding-left: 8px; line-height: 36px; display: flex; align-items: center; letter-spacing: -0.25px; }
.fl { width: 16px; height: 18px; margin-left: auto; margin-right: 11px; }
.tree { margin: 23px 17px 27px 18px; height: 728px; background: #fff; border: 1px solid #7f848c; padding-top: 1px; }
.props { margin: 23px 17px 0 18px; flex: 1; border: 1px solid #7f848c; }
.row { height: 40px; display: flex; align-items: center; white-space: pre; padding-left: 9px; }
.arrow { width: 24px; height: 16px; background: linear-gradient(#5c3f3d, #86605b); clip-path: polygon(0 0, 100% 0, 50% 100%); margin-right: 14px; }
.check { width: 20px; height: 20px; border-radius: 4px; background: #0560b8; margin-right: 10px; display: flex; align-items: center; justify-content: center; }
.check::after { content: ""; width: 9px; height: 5px; border: solid #fff; border-width: 0 0 1.500px 1.500px; transform: translateY(-1px) rotate(-48deg); }
.item { display: flex; align-items: center; height: 39px; line-height: 34px; width: 431px; border: 2px solid transparent; letter-spacing: -0.1px; padding-bottom: 1px; }
.item.focus { border: 2px dotted #222; }
.fo { width: 30px; height: 32px; margin-right: 14px; flex: none; }
.cl { width: 33px; height: 28px; margin-right: 11px; flex: none; }
.child .item { width: auto; }
.trunk { width: 2px; height: 40px; margin-left: 12px; background: #b5b0aa; }
.trunk.off { background: none; }
.elbow { width: 21px; height: 20px; border-left: 2px solid #b5b0aa; border-bottom: 2px solid #b5b0aa; margin: -20px 5px 0 38px; }

.view { flex: 1; background: #fff; position: relative; }
.view canvas { display: block; }
.axes { position: absolute; right: 2px; bottom: 34px; width: 52px; height: 60px; }
.axes text { font: 27px "Liberation Serif", serif; }

.console { flex: 1; padding: 9px 1px 0; }
.title.wide { width: 3603px; }
.wide .fl { margin-right: 26px; }
.cx { width: 16px; height: 16px; margin-right: 13px; margin-top: 2px; }
.log { margin: 23px 0 0 18px; width: 3568px; height: 194px; background: #fff; border: 1px solid #7f848c; display: flex; padding: 1px; }
.lines { width: 3533px; border-top: 2px solid #efefef; border-bottom: 2px solid #efefef; }
.lines p { margin: 0; height: 36px; line-height: 35px; padding-left: 9px; white-space: pre; letter-spacing: -0.15px; }
.lines .err { background: #f5f5f5; color: #800000; }
.scroll { flex: 1; background: #efefef; padding: 122px 0 0 10px; }
.scroll i { display: block; width: 7px; height: 36px; border-radius: 3px; background: #858585; }

.right { flex: 1; display: flex; flex-direction: column; border-left: 1px solid #fff; border-bottom: 2px solid #b7b7b7; }
.rg { border-bottom: 2px solid #b7b7b7; padding: 0 4px 1px 0; }
.rg.two { border-bottom: 0; padding-top: 1px; }
.rg .hgrip { margin: 5px 3px 8px 5px; }
.rg > .csf { height: 36px; font: 25px/36px "Liberation Mono", monospace; letter-spacing: -3.1px; color: #888; white-space: pre; }
.status { flex: 1; }
```
FILE: points.js
```js
// Draws the point cloud in window coordinates; the view starts at (628, 112).
const ctx = document.getElementById('points').getContext('2d');
ctx.translate(-628, -112);

let seed = 20241009;
const rnd = () => (seed = (seed * 1664525 + 1013904223) >>> 0) / 4294967296;
const X = u => Math.round(1740 + u / 2.613);
const Y = v => Math.floor(730 + v / 3);
const RED = '#f00', BLUE = '#00f';

function line(u1, u2, v, color, h) {
  ctx.fillStyle = color || RED;
  ctx.fillRect(X(u1), Y(v), X(u2) - X(u1), h || 1);
}
function dots(x1, x2, y, density, color) {
  ctx.fillStyle = color || RED;
  for (let x = x1; x < x2; x++) if (rnd() < density) ctx.fillRect(x, y, 1, 1);
}
function scatter(u1, v1, u2, v2, n, color) {
  ctx.fillStyle = color || RED;
  for (let i = 0; i < n; i++) {
    ctx.fillRect(X(u1 + rnd() * (u2 - u1)), Y(v1 + rnd() * (v2 - v1)), 1, 1);
  }
}
function blob(pts) {
  ctx.fillStyle = RED;
  ctx.beginPath();
  pts.forEach(p => ctx.lineTo(1740 + p[0] / 2.613, 730 + p[1] / 3));
  ctx.fill();
}

// Long scan lines
line(290, 985, 91);
line(327, 909, 118);
line(225, 1124, 121);
dots(1621, 1680, 775, .65, '#e00000');
dots(1680, 2604, 775, .4, '#e00000');
line(361, 836, 181);
line(400, 750, 184);
line(421, 712, 190, BLUE);
line(408, 738, 193);
line(423, 700, 196);
line(416, 720, 211);
line(358, 630, 235);
line(635, 839, 235);
line(444, 655, 250, BLUE);
line(460, 578, 247, BLUE);
line(481, 560, 262);
line(468, 560, 274);
line(449, 660, 286);
line(423, 480, 319);
line(447, 480, 325, BLUE);
line(443, 480, 334, BLUE);

// Dense body
blob([[425,380],[440,372],[455,354],[478,345],[480,318],[457,310],[462,295],[484,276],[500,290],[520,295],[570,288],[574,265],[560,262],[555,250],[590,240],[612,226],[624,245],[612,268],[598,280],[600,295],[645,298],[648,265],[657,260],[670,270],[670,298],[692,303],[665,320],[640,332],[622,342],[626,374],[600,376],[560,370],[520,379],[480,380],[428,392]]);
blob([[690,303],[775,306],[820,313],[700,309]]);
blob([[668,335],[705,308],[726,302],[702,328]]);
scatter(535, 160, 690, 182, 45);
scatter(725, 153, 768, 176, 38);
scatter(700, 172, 730, 181, 15);
scatter(580, 196, 700, 222, 240);
scatter(475, 220, 600, 250, 160);
scatter(550, 230, 620, 282, 170);
scatter(655, 215, 700, 290, 210);
scatter(700, 230, 740, 250, 25);
scatter(735, 190, 782, 208, 18);
scatter(435, 280, 470, 370, 85);
scatter(402, 343, 455, 375, 85);
scatter(405, 318, 450, 330, 16);
scatter(475, 373, 630, 386, 90);
scatter(440, 388, 495, 405, 24);
scatter(480, 280, 575, 300, 100);
scatter(635, 340, 715, 358, 42);
scatter(625, 372, 672, 377, 20);
scatter(705, 358, 797, 377, 35);
scatter(865, 315, 936, 320, 28);
scatter(415, 400, 660, 432, 20);
scatter(370, 430, 470, 450, 20);
scatter(720, 255, 760, 300, 22);
scatter(630, 245, 660, 290, 12);

// Accents inside the body
scatter(430, 290, 630, 374, 24, '#0a0');
scatter(430, 240, 680, 374, 60, BLUE);
scatter(520, 325, 620, 370, 20, '#e80');
ctx.fillStyle = '#ff0';
ctx.fillRect(1895, 827, 20, 1);
ctx.fillRect(1904, 818, 1, 20);
line(565, 618, 300, BLUE);
line(570, 598, 297, BLUE);
line(572, 592, 303, BLUE);
line(583, 604, 325, BLUE);

// Isolated returns
ctx.fillStyle = RED;
[[330,388],[380,385],[434,166],[594,127],[656,142],[782,148],[790,151],[811,154],[803,133],[869,178],[879,166],[957,166],[965,166],[978,166],[939,244],[1036,322],[1274,337],[1360,340],[1370,340],[1373,340],[701,409],[730,433],[626,397],[838,314],[842,316],[735,138]].forEach(p => ctx.fillRect(X(p[0]), Y(p[1]), 1, 1));

// Lower blue line
line(102, 930, 454, '#0000e8');
dots(2096, 2126, 881, .75, '#0000e8');
line(1005, 1103, 454, '#0000e8');
dots(2186, 2196, 881, .4, '#0000e8');
line(1195, 1377, 454, '#0000e8');

// Far line below the body
dots(1544, 1720, 1065, .8, '#e81000');
[[1730,1746],[1760,1777],[1787,1801],[1807,1812],[1821,1834]].forEach(r => dots(r[0], r[1], 1065, .7, '#e81000'));
[1846,1922,1925,1938,1941,1997,2001,2004,2040,2042,2126,2129,2133,2161,2178,2181,2184,2187,2190,2200,2235,2238,2301,2303,2326,2375,2380,2384,2392,2399,2402].forEach(x => ctx.fillRect(x, 1065, 1, 1));
ctx.fillRect(2721, 1065, 36, 1);

// Pivot marker
ctx.fillStyle = '#c8c8c8';
ctx.fillRect(2141, 913, 20, 1);
ctx.fillRect(2150, 903, 1, 20);
```
